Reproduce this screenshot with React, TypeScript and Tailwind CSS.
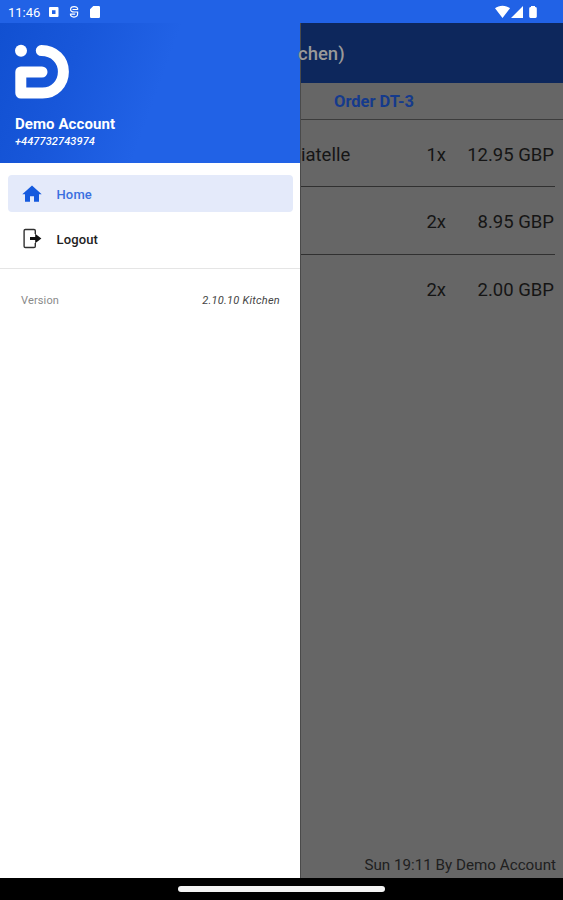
const orders = [
  { name: "iatelle", qty: "1x", price: "12.95 GBP", row: "h-[67px] pt-[5px]" },
  { name: "", qty: "2x", price: "8.95 GBP", row: "h-[68px] pt-[5px]" },
  { name: "", qty: "2x", price: "2.00 GBP", row: "h-[68px] pt-[3px]" },
];

function StatusBar() {
  return (
    <header className="flex h-[23px] shrink-0 items-center bg-[#2162e6] pl-2 text-white">
      <span className="w-[40px] pt-[2px] text-[13px] leading-none">11:46</span>
      <svg className="h-[23px] w-[55px]" viewBox="48 0 55 23" fill="white">
        <path fillRule="evenodd" d="M50 7h7.5a1 1 0 0 1 1 1v8a1 1 0 0 1-1 1H50a1 1 0 0 1-1-1V8a1 1 0 0 1 1-1zm2 3.2v3.8h3.5v-3.8z" />
        <path d="M77.8 9.5c0-3.8-7.2-3.8-7.2 0 0 2.4 1.5 2.5 3.5 2.5h3.5v1.8c0 4.3-7.2 4.3-7.2 0M72.5 9.5h5.3M70.2 14.2h5" fill="none" stroke="white" strokeWidth="1.2" />
        <path d="M93.3 6h5.5a1.2 1.2 0 0 1 1.2 1.2v9.6a1.2 1.2 0 0 1-1.2 1.2h-7.6a1.2 1.2 0 0 1-1.2-1.2V9.3z" />
      </svg>
      <svg className="ml-auto mr-[23px] h-[23px] w-[45px]" viewBox="495 0 45 23" fill="white">
        <path d="M495 8.3c4-3.5 11-3.5 15 0L502.5 18zM511 18 523 6v12zM531 6h4v1.1q1.8 0 1.8 1.3v8.2q0 1.4-1.3 1.4h-5q-1.3 0-1.3-1.4V8.4q0-1.3 1.8-1.3z" />
      </svg>
    </header>
  );
}

function Drawer() {
  return (
    <aside className="flex w-[300px] shrink-0 flex-col bg-white">
      <div className="h-[140px] bg-[#2162e6] bg-linear-[110deg,#1150d1_0%,#1857da_25%,#2162e6_52%] pl-[14px] pt-[20px] text-white">
        <svg className="block h-[57px] w-[58px]" viewBox="14 43 58 57" fill="none">
          <circle cx="21" cy="50.8" r="6" fill="white" />
          <path d="M41.3 50.6C54.5 50.6 63.4 60 63.4 71.8S54.5 93 42.5 93H20.8V72H42" stroke="white" strokeWidth="11" strokeLinecap="round" strokeLinejoin="round" />
        </svg>
        <div className="ml-px mt-[15px] text-[15px] font-bold leading-[18px] tracking-[0.08px]">Demo Account</div>
        <div className="ml-px text-[11px] font-medium italic leading-[18px] tracking-[0.1px]">+447732743974</div>
      </div>
      <nav className="flex h-[106px] flex-col gap-2 border-b border-[#e5e5e5] pl-2 pr-[7px] pt-[12px] text-[13px] font-medium tracking-[0.15px]">
        <a className="flex h-[37px] items-center rounded-[4px] bg-[#e4eafa] text-[#3a70e0]">
          <svg className="ml-[12px] mr-[12px] h-6 w-6" viewBox="0 0 24 24" fill="#155ade"><path d="M10 19.8v-5.6h4v5.6h5v-7.6h2.7L12 3.5l-9.7 8.7H5v7.6z" /></svg>
          <span className="pl-[0.5px] pt-[2px]">Home</span>
        </a>
        <a className="flex h-[37px] items-center text-[#222]">
          <svg className="ml-[12px] mr-[12px] h-6 w-6" viewBox="20 227 24 24" fill="none">
            <path d="M35.3 234v-3.3q0-1.2-1.3-1.2h-8.6q-1.3 0-1.3 1.3v15.4q0 1.3 1.3 1.3H34q1.3 0 1.3-1.2V243" stroke="#303030" strokeWidth="1.4" />
            <path d="M30 237h5.2v-3.2l6.2 4.7-6.2 4.7V240H30z" fill="#111" />
          </svg>
          <span className="pl-[0.5px] pt-[2px]">Logout</span>
        </a>
      </nav>
      <div className="mt-[22px] flex h-5 items-center justify-between pl-[21px] pr-[20px] text-[11px]">
        <span className="tracking-[0.15px] text-[#8a8a8a]">Version</span>
        <span className="italic tracking-[0.25px] text-[#444]">2.10.10 Kitchen</span>
      </div>
    </aside>
  );
}

function OrderPanel() {
  return (
    <main className="flex min-w-0 flex-1 flex-col border-l border-[#4a4a4a] bg-[#666]">
      <div className="flex h-[60px] shrink-0 items-center bg-[#0d275c] pt-[4px] text-[18.5px] font-medium text-[#999]">
        <span className="-ml-[3px]">chen)</span>
      </div>
      <div className="h-[37px] shrink-0 border-b border-[#3c3c3c] pl-[33px] pt-[7px] text-[16.5px] font-bold leading-[24px] text-[#153a8c]">Order DT-3</div>
      {orders.map((order, i) => (
        <div key={order.price} className={`${order.row} flex shrink-0 items-center text-[18.5px] text-[#151515] ${i < 2 ? "mr-2 border-b border-[#303030] pr-px" : "pr-[9px]"}`}>
          <span className="flex-1">{order.name}</span>
          <span className="w-[20px] text-right">{order.qty}</span>
          <span className="w-[108px] text-right">{order.price}</span>
        </div>
      ))}
      <div className="mt-auto pb-[3px] pr-[7px] text-right text-[15.2px] leading-[20px] text-[#202020]">Sun 19:11 By Demo Account</div>
    </main>
  );
}

export default function App() {
  return (
    <div className="flex h-[900px] w-[563px] flex-col overflow-hidden font-['Roboto',sans-serif]">
      <StatusBar />
      <div className="flex min-h-0 flex-1">
        <Drawer />
        <OrderPanel />
      </div>
      <footer className="flex h-[22px] shrink-0 justify-center bg-black pt-2">
        <div className="h-[6px] w-[207px] rounded-full bg-[#f4f4f4]" />
      </footer>
    </div>
  );
}
